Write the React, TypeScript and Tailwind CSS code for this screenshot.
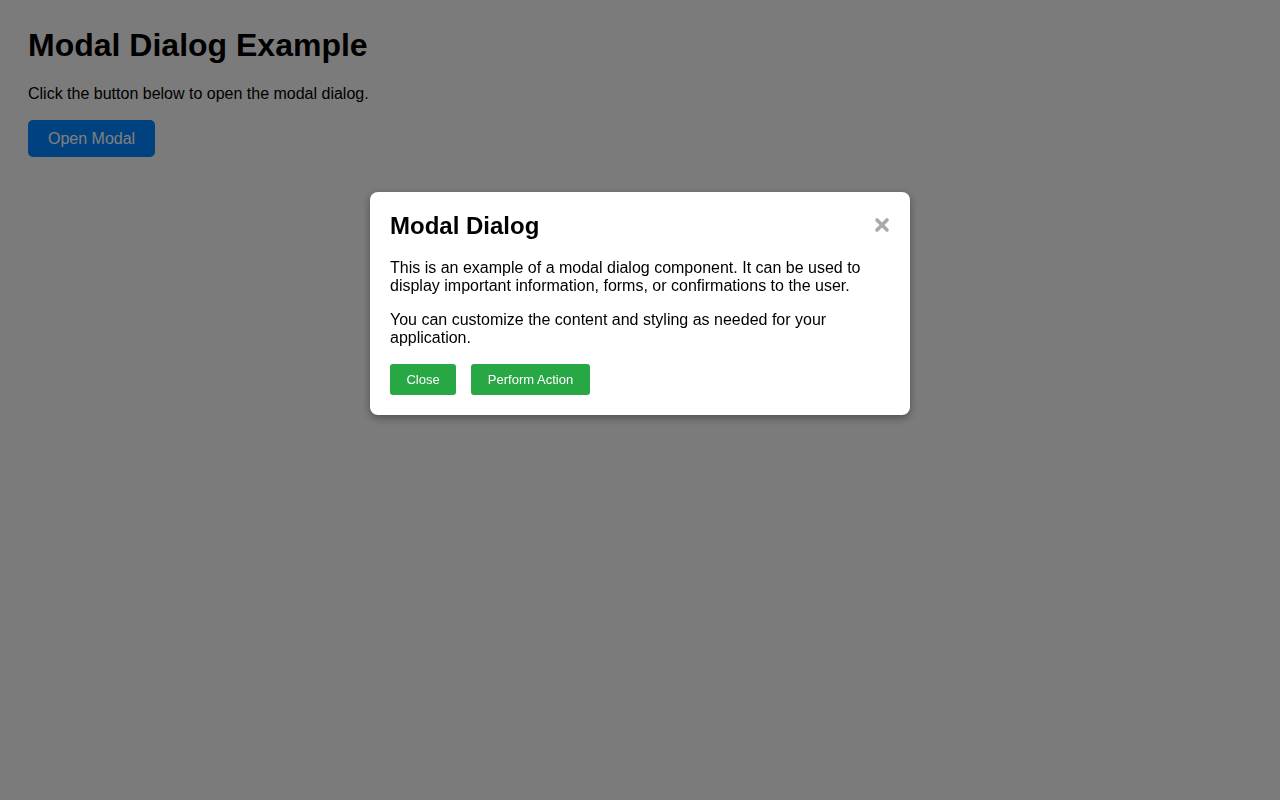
import React, { useState } from 'react'

export default function App() {
  const [open, setOpen] = useState(true)

  return (
    <div className="min-h-screen bg-[#f6f6f6] px-[28px] pt-[27px] text-black font-['Liberation_Sans',Arial,sans-serif]">
      {/* Page content */}
      <h1 className="text-[32px] leading-[37px] font-bold">Modal Dialog Example</h1>
      <p className="mt-[21px] text-[16px] leading-[18px]">Click the button below to open the modal dialog.</p>
      <button
        onClick={() => setOpen(true)}
        className="mt-[17px] rounded-[5px] bg-[#0082ff] px-5 py-[9px] text-[16px] leading-[19px] text-white"
      >
        Open Modal
      </button>

      {/* Overlay + dialog */}
      {open && (
        <div className="fixed inset-0 flex justify-center bg-black/50">
          <div className="mt-[192px] h-fit w-[540px] rounded-[8px] bg-white p-5 shadow-[0_3px_8px_rgba(0,0,0,0.35)]">
            <div className="flex items-start justify-between">
              <h2 className="text-[24px] leading-[28px] font-bold">Modal Dialog</h2>
              <button onClick={() => setOpen(false)} className="mt-[5px] text-[#aaaaaa]" title="Close">
                <svg width="16" height="16" viewBox="0 0 16 16">
                  <path d="M3 3L13 13M13 3L3 13" stroke="currentColor" strokeWidth={3.6} strokeLinecap="round" />
                </svg>
              </button>
            </div>
            <p className="mt-[19px] text-[16px] leading-[18px]">
              This is an example of a modal dialog component. It can be used to display important information, forms, or
              confirmations to the user.
            </p>
            <p className="mt-[16px] text-[16px] leading-[18px]">
              You can customize the content and styling as needed for your application.
            </p>
            <div className="mt-[17px] flex gap-[15px]">
              <button
                onClick={() => setOpen(false)}
                className="w-[66px] rounded-[3px] bg-[#28a745] py-2 text-[13px] leading-[15px] text-white"
              >
                Close
              </button>
              <button className="w-[119px] rounded-[3px] bg-[#28a745] py-2 text-[13px] leading-[15px] text-white">
                Perform Action
              </button>
            </div>
          </div>
        </div>
      )}
    </div>
  )
}
